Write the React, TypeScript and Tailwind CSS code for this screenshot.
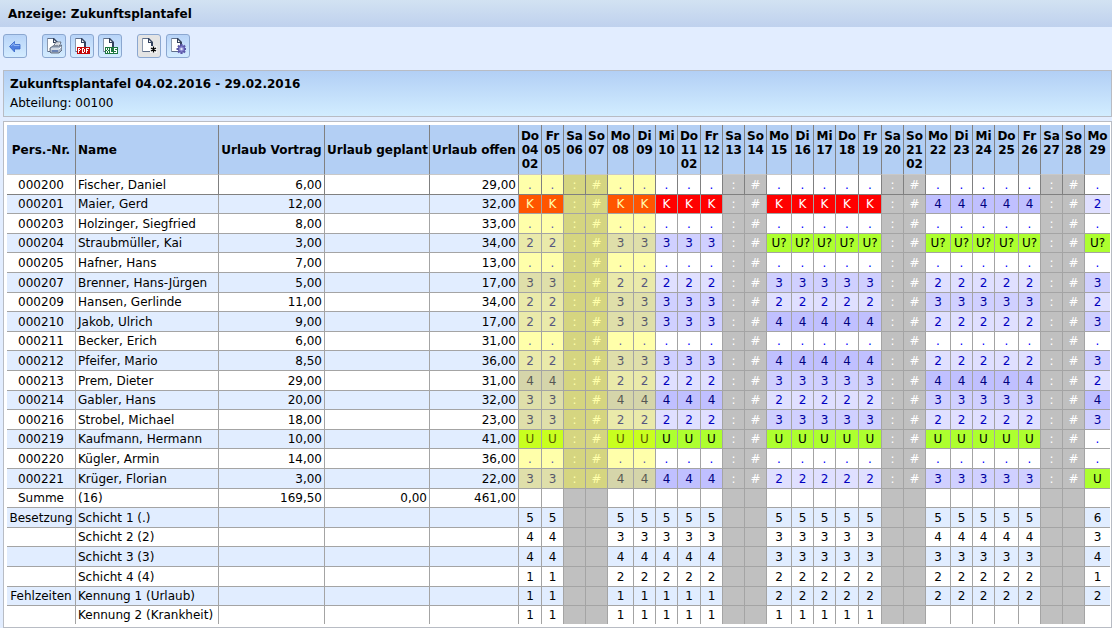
import type { ReactNode } from "react";
import { clsx } from "clsx";

interface Day {
  label: string;
  date: string;
  month?: string;
  width: string;
}

const DAYS: Day[] = [
  { label: "Do", date: "04", month: "02", width: "w-[23px]" },
  { label: "Fr", date: "05", width: "w-[22px]" },
  { label: "Sa", date: "06", width: "w-[22px]" },
  { label: "So", date: "07", width: "w-[22px]" },
  { label: "Mo", date: "08", width: "w-[26px]" },
  { label: "Di", date: "09", width: "w-[22px]" },
  { label: "Mi", date: "10", width: "w-[22px]" },
  { label: "Do", date: "11", month: "02", width: "w-[23px]" },
  { label: "Fr", date: "12", width: "w-[22px]" },
  { label: "Sa", date: "13", width: "w-[22px]" },
  { label: "So", date: "14", width: "w-[22px]" },
  { label: "Mo", date: "15", width: "w-[25px]" },
  { label: "Di", date: "16", width: "w-[22px]" },
  { label: "Mi", date: "17", width: "w-[22px]" },
  { label: "Do", date: "18", width: "w-[23px]" },
  { label: "Fr", date: "19", width: "w-[23px]" },
  { label: "Sa", date: "20", width: "w-[22px]" },
  { label: "So", date: "21", month: "02", width: "w-[22px]" },
  { label: "Mo", date: "22", width: "w-[25px]" },
  { label: "Di", date: "23", width: "w-[22px]" },
  { label: "Mi", date: "24", width: "w-[22px]" },
  { label: "Do", date: "25", width: "w-[24px]" },
  { label: "Fr", date: "26", width: "w-[22px]" },
  { label: "Sa", date: "27", width: "w-[22px]" },
  { label: "So", date: "28", width: "w-[22px]" },
  { label: "Mo", date: "29", width: "w-[25px]" },
];

// number of leading days that are already locked for planning
const LOCKED_DAYS = 6;

interface Row {
  nr: string;
  name: string;
  vortrag?: string;
  geplant?: string;
  offen?: string;
  // one character per day, "?" is a requested vacation day
  days: string;
  summary?: boolean;
}

const ROWS: Row[] = [
  { nr: "000200", name: "Fischer, Daniel", vortrag: "6,00", offen: "29,00", days: "..:#.....:#.....:#.....:#." },
  { nr: "000201", name: "Maier, Gerd", vortrag: "12,00", offen: "32,00", days: "KK:#KKKKK:#KKKKK:#44444:#2" },
  { nr: "000203", name: "Holzinger, Siegfried", vortrag: "8,00", offen: "33,00", days: "..:#.....:#.....:#.....:#." },
  { nr: "000204", name: "Straubmüller, Kai", vortrag: "3,00", offen: "34,00", days: "22:#33333:#?????:#?????:#?" },
  { nr: "000205", name: "Hafner, Hans", vortrag: "7,00", offen: "13,00", days: "..:#.....:#.....:#.....:#." },
  { nr: "000207", name: "Brenner, Hans-Jürgen", vortrag: "5,00", offen: "17,00", days: "33:#22222:#33333:#22222:#3" },
  { nr: "000209", name: "Hansen, Gerlinde", vortrag: "11,00", offen: "34,00", days: "22:#33333:#22222:#33333:#2" },
  { nr: "000210", name: "Jakob, Ulrich", vortrag: "9,00", offen: "17,00", days: "22:#33333:#44444:#22222:#3" },
  { nr: "000211", name: "Becker, Erich", vortrag: "6,00", offen: "31,00", days: "..:#.....:#.....:#.....:#." },
  { nr: "000212", name: "Pfeifer, Mario", vortrag: "8,50", offen: "36,00", days: "22:#33333:#44444:#22222:#3" },
  { nr: "000213", name: "Prem, Dieter", vortrag: "29,00", offen: "31,00", days: "44:#22222:#33333:#44444:#2" },
  { nr: "000214", name: "Gabler, Hans", vortrag: "20,00", offen: "32,00", days: "33:#44444:#22222:#33333:#4" },
  { nr: "000216", name: "Strobel, Michael", vortrag: "18,00", offen: "23,00", days: "33:#22222:#33333:#22222:#3" },
  { nr: "000219", name: "Kaufmann, Hermann", vortrag: "10,00", offen: "41,00", days: "UU:#UUUUU:#UUUUU:#UUUUU:#." },
  { nr: "000220", name: "Kügler, Armin", vortrag: "14,00", offen: "36,00", days: "..:#.....:#.....:#.....:#." },
  { nr: "000221", name: "Krüger, Florian", vortrag: "3,00", offen: "22,00", days: "33:#44444:#22222:#33333:#U" },
  { nr: "Summe", name: "(16)", vortrag: "169,50", geplant: "0,00", offen: "461,00", days: "", summary: true },
  { nr: "Besetzung", name: "Schicht 1 (.)", days: "55  55555  55555  55555  6", summary: true },
  { nr: "", name: "Schicht 2 (2)", days: "44  33333  33333  44444  3", summary: true },
  { nr: "", name: "Schicht 3 (3)", days: "44  44444  33333  33333  4", summary: true },
  { nr: "", name: "Schicht 4 (4)", days: "11  22222  22222  22222  1", summary: true },
  { nr: "Fehlzeiten", name: "Kennung 1 (Urlaub)", days: "11  11111  22222  22222  2", summary: true },
  { nr: "", name: "Kennung 2 (Krankheit)", days: "11  11111  11111", summary: true },
];

const CODE_STYLES: Record<string, string> = {
  ".": "bg-white text-[#0000ff]",
  ":": "bg-[#c0c0c0] text-white",
  "#": "bg-[#c0c0c0] text-white",
  "2": "bg-[#e0e0ff] text-[#0000c0]",
  "3": "bg-[#d0d0ff] text-[#0000a0]",
  "4": "bg-[#c0c0ff] text-[#000080]",
  K: "bg-[#ff0000] text-white",
  U: "bg-[#adff2f] text-black",
  "?": "bg-[#adff2f] text-black",
};

function Sheet() {
  return (
    <>
      <path d="M1.5 .5h6l4 4v9h-10z" fill="#fff" />
      <path d="M1.5 13.5V.5" stroke="#8b98ad" fill="none" />
      <path d="M1.5 .5h6M1.5 13.5h10" stroke="#5f6f8a" fill="none" />
      <path d="M11 4v10" stroke="#33415c" strokeWidth="2" fill="none" />
      <path d="M7 0h1l4 4v1H7z" fill="#33415c" />
      <path d="M8 2l2 2H8z" fill="#fff" />
    </>
  );
}

function PrintIcon() {
  return (
    <>
      <Sheet />
      <path d="M7 9l3-5h5l-2 5z" fill="#fff" stroke="#4b5668" strokeWidth=".8" />
      <path d="M9.5 6h3.5M8.5 7.5h3.5" stroke="#8894a8" strokeWidth=".7" />
      <path d="M4 10l3-2h7l2-1v5l-3 3H5l-1-1z" fill="#a9b6c9" stroke="#4b5668" strokeWidth=".8" />
      <path d="M5 11h8l2-2" fill="none" stroke="#fff" />
      <path d="M6 13h6" stroke="#3f62a8" strokeWidth="1.2" />
    </>
  );
}

function Tag({ fill, children }: { fill: string; children: ReactNode }) {
  return (
    <>
      <Sheet />
      <path d="M3 9h13v7H3z" fill={fill} />
      <g stroke="#fff" fill="none" shapeRendering="crispEdges">
        {children}
      </g>
    </>
  );
}

function Gear() {
  return (
    <>
      <Sheet />
      <g stroke="#5a56a8" strokeWidth="2.2">
        <path d="M11.5 6v10M6.500 11h10M8 7.500l7 7M15 7.500l-7 7" />
      </g>
      <circle cx="11.5" cy="11" r="3.2" fill="#8884d0" stroke="#5a56a8" />
      <circle cx="11.5" cy="11" r="1.2" fill="#dfe6fa" />
    </>
  );
}

function ToolButton({ label, active, children }: { label: string; active?: boolean; children: ReactNode }) {
  return (
    <button
      type="button"
      aria-label={label}
      className={clsx(
        "flex size-6 items-center justify-center rounded-[3px] border border-[#8ba7d0]",
        active ? "bg-[#e4e4e4]" : "bg-linear-to-b from-[#b8d4f8] to-[#d4ecff]",
      )}
    >
      <svg viewBox="0 0 16 16" className="size-4" aria-hidden="true">
        {children}
      </svg>
    </button>
  );
}

function Toolbar() {
  return (
    <div className="flex h-[43px] items-center gap-[15px] px-[3px] pb-[5px]">
      <ToolButton label="Zurück">
        <path d="M2.500 8.500l5-5v3H13v4.500H7.500v3z" fill="#4f7fe0" stroke="#3564c8" strokeWidth=".8" />
        <path d="M4 8L7 5.500v2h5.500" fill="none" stroke="#8db4f5" />
      </ToolButton>
      <div className="flex gap-1">
        <ToolButton label="Drucken">
          <PrintIcon />
        </ToolButton>
        <ToolButton label="PDF">
          <Tag fill="#c40808">
            <path d="M4.500 15v-5M5 10.500h1M6.500 11v1M5 12.500h1M8.500 10v5M9 10.500h1M9 14.500h1M10.500 11v3M12.500 10v5M13 10.500h2M13 12.500h1" />
          </Tag>
        </ToolButton>
        <ToolButton label="XLS">
          <Tag fill="#1f7840">
            <path d="M4.500 10v2M6.500 10v2M5 12.500h1M4.500 13v2M6.500 13v2M8.500 10v5M8 14.500h3M15 10.500h-3M12.500 10v3M12 12.500h3M14.500 12v3M12 14.500h3" />
          </Tag>
        </ToolButton>
      </div>
      <div className="flex gap-[5px]">
        <ToolButton label="Neu" active>
          <Sheet />
          <path d="M9 8h7v7H9z" fill="#f4f4f4" />
          <path d="M12.5 8.500v6M10 10l5 3M15 10l-5 3" stroke="#000" strokeWidth="1.3" />
        </ToolButton>
        <ToolButton label="Einstellungen">
          <Gear />
        </ToolButton>
      </div>
    </div>
  );
}

function DayCell({ code, index, row, border }: { code: string; index: number; row: Row; border: string }) {
  const label = DAYS[index].label;
  const weekend = label === "Sa" || label === "So";

  return (
    <td
      className={clsx(
        "p-0 text-center",
        index < DAYS.length - 1 && "border-r",
        border,
        row.summary ? weekend && "bg-[#c0c0c0]" : CODE_STYLES[code],
        !row.summary &&
          index < LOCKED_DAYS &&
          "relative after:absolute after:inset-0 after:bg-[rgba(255,255,0,0.333)]",
      )}
    >
      {code === "?" ? "U?" : code}
    </td>
  );
}

function PlanTable() {
  const head = "border-r border-b border-r-[#808080] border-b-[#c8c8c8] px-[2px]";

  return (
    <table className="w-full table-fixed border-separate border-spacing-0 leading-[14px] whitespace-nowrap">
      <colgroup>
        <col className="w-[69px]" />
        <col className="w-[143px]" />
        <col className="w-[106px]" />
        <col className="w-[105px]" />
        <col className="w-[89px]" />
        {DAYS.map((day) => (
          <col key={day.date} className={day.width} />
        ))}
      </colgroup>
      <thead className="bg-[#b3cff4]">
        <tr className="h-[50px]">
          <th className={head}>Pers.-Nr.</th>
          <th className={clsx(head, "text-left")}>Name</th>
          <th className={head}>Urlaub Vortrag</th>
          <th className={head}>Urlaub geplant</th>
          <th className={head}>Urlaub offen</th>
          {DAYS.map((day, i) => (
            <th
              key={day.date}
              className={clsx(
                "border-b border-r-[#808080] border-b-[#c8c8c8] px-0 pt-1 align-top",
                i < DAYS.length - 1 && "border-r",
              )}
            >
              {day.label}
              <br />
              {day.date}
              {day.month && (
                <>
                  <br />
                  {day.month}
                </>
              )}
            </th>
          ))}
        </tr>
      </thead>
      <tbody>
        {ROWS.map((row, i) => {
          const last = i === ROWS.length - 1;
          const border = clsx(i === 0 ? "border-[#808080]" : "border-[#a4a4a4]", !last && "border-b");
          const cell = clsx("border-r px-[2px] py-0", border);
          const height = last ? "h-[18px]" : i % 5 === 1 || i % 5 === 3 ? "h-[19px]" : "h-5";

          return (
            <tr key={i} className={clsx(height, i % 2 ? "bg-[#e1edff]" : "bg-white")}>
              <td className={clsx(cell, "text-center")}>{row.nr}</td>
              <td className={cell}>{row.name}</td>
              <td className={clsx(cell, "text-right")}>{row.vortrag}</td>
              <td className={clsx(cell, "text-right")}>{row.geplant}</td>
              <td className={clsx(cell, "text-right")}>{row.offen}</td>
              {DAYS.map((day, d) => (
                <DayCell key={day.date} code={(row.days[d] ?? "").trim()} index={d} row={row} border={border} />
              ))}
            </tr>
          );
        })}
      </tbody>
    </table>
  );
}

export default function App() {
  return (
    <div className="min-h-screen bg-[#e2edff] font-['DejaVu_Sans',sans-serif] text-xs text-black">
      <h1 className="flex h-[27px] items-center bg-linear-to-b from-[#d2e2f2] to-[#bfd1ee] px-2 font-bold">
        Anzeige: Zukunftsplantafel
      </h1>
      <Toolbar />
      <main className="flex flex-col gap-1 pl-[3px]">
        <header className="border border-[#b8bcc4] bg-linear-to-b from-[#b2cff5] to-[#d2edff] px-1.5 pt-1 pb-[3px] leading-[19px]">
          <h2 className="font-bold">Zukunftsplantafel 04.02.2016 - 29.02.2016</h2>
          <p>Abteilung: 00100</p>
        </header>
        <section className="border border-[#b8bcc4] bg-white py-[3px] pr-[2px] pl-[3px]">
          <PlanTable />
        </section>
      </main>
    </div>
  );
}
